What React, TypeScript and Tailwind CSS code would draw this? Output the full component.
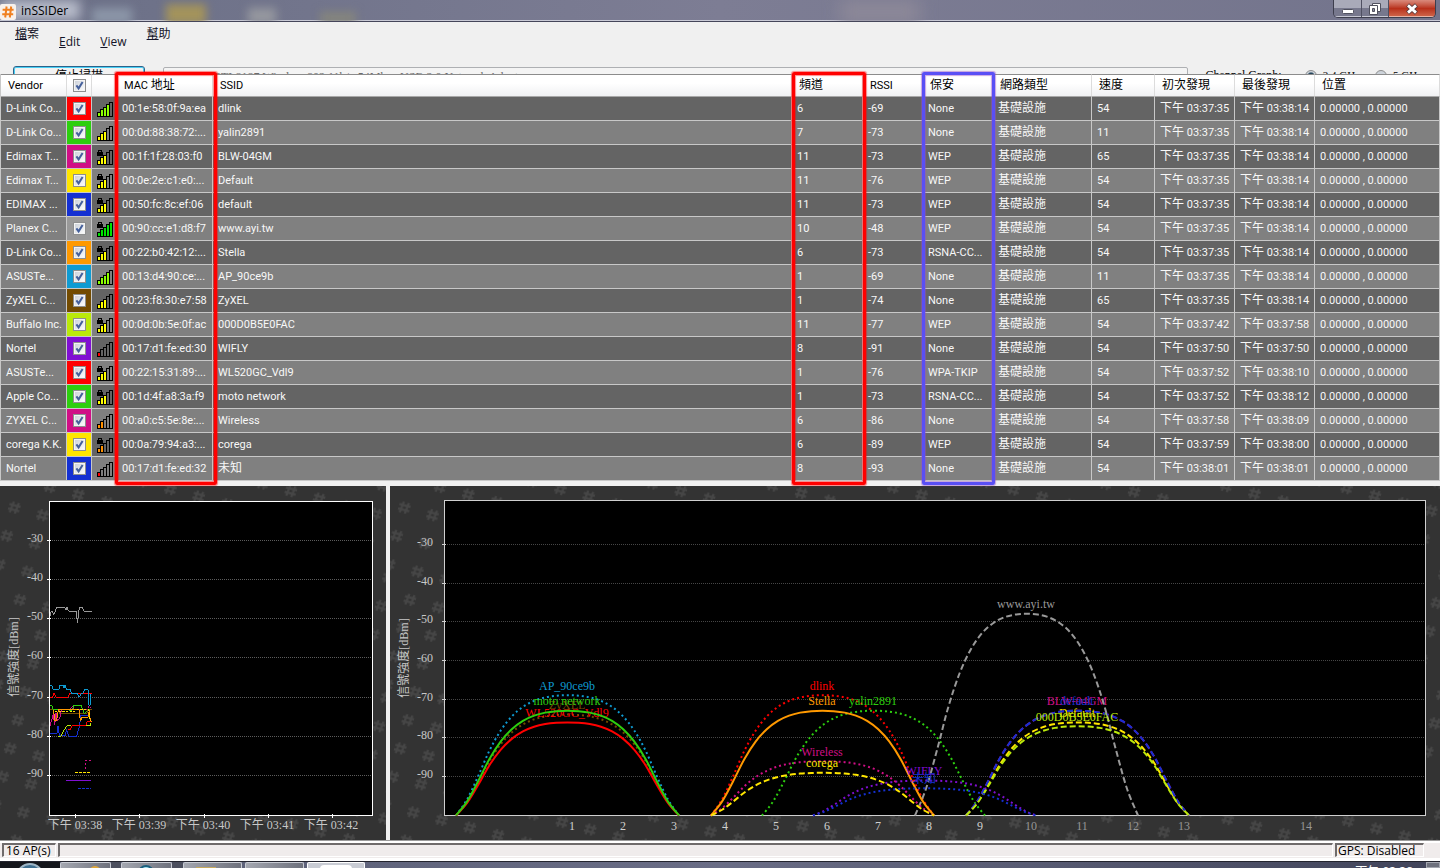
import { useId } from 'react'

type AccessPoint = {
  vendor: string
  color: string
  mac: string
  ssid: string
  channel: number
  rssi: number
  security: string
  speed: number
  first: string
  last: string
}

const accessPoints: AccessPoint[] = [
  { vendor: 'D-Link Co...', color: '#ff0000', mac: '00:1e:58:0f:9a:ea', ssid: 'dlink', channel: 6, rssi: -69, security: 'None', speed: 54, first: '03:37:35', last: '03:38:14' },
  { vendor: 'D-Link Co...', color: '#2dce0f', mac: '00:0d:88:38:72:...', ssid: 'yalin2891', channel: 7, rssi: -73, security: 'None', speed: 11, first: '03:37:35', last: '03:38:14' },
  { vendor: 'Edimax T...', color: '#d00f86', mac: '00:1f:1f:28:03:f0', ssid: 'BLW-04GM', channel: 11, rssi: -73, security: 'WEP', speed: 65, first: '03:37:35', last: '03:38:14' },
  { vendor: 'Edimax T...', color: '#ffe600', mac: '00:0e:2e:c1:e0:...', ssid: 'Default', channel: 11, rssi: -76, security: 'WEP', speed: 54, first: '03:37:35', last: '03:38:14' },
  { vendor: 'EDIMAX ...', color: '#1430d2', mac: '00:50:fc:8c:ef:06', ssid: 'default', channel: 11, rssi: -73, security: 'WEP', speed: 54, first: '03:37:35', last: '03:38:14' },
  { vendor: 'Planex C...', color: '#999999', mac: '00:90:cc:e1:d8:f7', ssid: 'www.ayi.tw', channel: 10, rssi: -48, security: 'WEP', speed: 54, first: '03:37:35', last: '03:38:14' },
  { vendor: 'D-Link Co...', color: '#ff9900', mac: '00:22:b0:42:12:...', ssid: 'Stella', channel: 6, rssi: -73, security: 'RSNA-CC...', speed: 54, first: '03:37:35', last: '03:38:14' },
  { vendor: 'ASUSTe...', color: '#0f9bd2', mac: '00:13:d4:90:ce:...', ssid: 'AP_90ce9b', channel: 1, rssi: -69, security: 'None', speed: 11, first: '03:37:35', last: '03:38:14' },
  { vendor: 'ZyXEL C...', color: '#734b00', mac: '00:23:f8:30:e7:58', ssid: 'ZyXEL', channel: 1, rssi: -74, security: 'None', speed: 65, first: '03:37:35', last: '03:38:14' },
  { vendor: 'Buffalo Inc.', color: '#bbe90a', mac: '00:0d:0b:5e:0f:ac', ssid: '000D0B5E0FAC', channel: 11, rssi: -77, security: 'WEP', speed: 54, first: '03:37:42', last: '03:37:58' },
  { vendor: 'Nortel', color: '#800fd2', mac: '00:17:d1:fe:ed:30', ssid: 'WIFLY', channel: 8, rssi: -91, security: 'None', speed: 54, first: '03:37:50', last: '03:37:50' },
  { vendor: 'ASUSTe...', color: '#ff0000', mac: '00:22:15:31:89:...', ssid: 'WL520GC_Vdl9', channel: 1, rssi: -76, security: 'WPA-TKIP', speed: 54, first: '03:37:52', last: '03:38:10' },
  { vendor: 'Apple Co...', color: '#2dce0f', mac: '00:1d:4f:a8:3a:f9', ssid: 'moto network', channel: 1, rssi: -73, security: 'RSNA-CC...', speed: 54, first: '03:37:52', last: '03:38:12' },
  { vendor: 'ZYXEL C...', color: '#d00f86', mac: '00:a0:c5:5e:8e:...', ssid: 'Wireless', channel: 6, rssi: -86, security: 'None', speed: 54, first: '03:37:58', last: '03:38:09' },
  { vendor: 'corega K.K.', color: '#ffe600', mac: '00:0a:79:94:a3:...', ssid: 'corega', channel: 6, rssi: -89, security: 'WEP', speed: 54, first: '03:37:59', last: '03:38:00' },
  { vendor: 'Nortel', color: '#1430d2', mac: '00:17:d1:fe:ed:32', ssid: '未知', channel: 8, rssi: -93, security: 'None', speed: 54, first: '03:38:01', last: '03:38:01' },
]

const levels = [-30, -40, -50, -60, -70, -80, -90]

function Checkbox({ label }: { label: string }) {
  return (
    <span className="relative inline-block size-[13px] align-middle">
      <input
        type="checkbox"
        defaultChecked
        aria-label={label}
        className="peer block size-[13px] appearance-none border border-[#8e8f8f] bg-gradient-to-br from-[#c9ced6] to-white shadow-[inset_0_0_0_1px_#f4f4f4]"
      />
      <svg viewBox="0 0 13 13" className="pointer-events-none absolute inset-0 hidden size-[13px] peer-checked:block">
        <path d="M3.4 6.4 5.6 9.4 9.6 3" fill="none" stroke="#45609c" strokeWidth="2" />
      </svg>
    </span>
  )
}

function SignalIcon({ rssi, locked }: { rssi: number; locked: boolean }) {
  const [count, fill] =
    rssi > -60 ? [5, '#00e400'] : rssi > -72 ? [4, '#8cff00'] : rssi > -80 ? [3, '#ffff00'] : rssi > -90 ? [2, '#ff9000'] : [1, '#ff0000']
  return (
    <svg viewBox="0 0 16 16" className="block size-4" shapeRendering="crispEdges">
      {[4, 7, 9, 12, 14].map((h, i) => (
        <rect
          key={i}
          x={i * 3 + 0.5}
          y={15.5 - h}
          width="3"
          height={h}
          fill={i < Number(count) ? String(fill) : 'none'}
          stroke="#000"
        />
      ))}
      {locked && (
        <>
          <rect x="0" y="3" width="6" height="4" fill="#000" />
          <path d="M1.5 3V1.5h3V3" fill="none" stroke="#000" />
        </>
      )}
    </svg>
  )
}

const headCell = 'h-[23px] border-y border-r border-t-[#8c8c8c] border-b-[#a8a8a8] border-r-[#dcdcdc] pl-[7px] text-left font-normal'
const cell = 'h-6 overflow-hidden border-r border-b border-[#c8c8c8] pl-[5px] whitespace-nowrap'
const cjk = 'text-xs'

function Time({ value }: { value: string }) {
  return (
    <>
      <span className={cjk}>下午</span> {value}
    </>
  )
}

function NetworkTable() {
  return (
    <table className="w-full table-fixed border-separate border-spacing-0 border-l border-[#c8c8c8] font-[Roboto,'Noto_Sans_CJK_TC',sans-serif] text-[11px] leading-4">
      <colgroup>
        <col className="w-[66px]" />
        <col className="w-[25px]" />
        <col className="w-[25px]" />
        <col className="w-[96px]" />
        <col />
        <col className="w-[71px]" />
        <col className="w-[60px]" />
        <col className="w-[70px]" />
        <col className="w-[99px]" />
        <col className="w-[63px]" />
        <col className="w-[80px]" />
        <col className="w-[80px]" />
        <col className="w-[125px]" />
      </colgroup>
      <thead className="bg-gradient-to-b from-white from-40% to-[#eff0f2] text-black">
        <tr>
          <th className={headCell}>Vendor</th>
          <th className="border-y border-r border-t-[#8c8c8c] border-b-[#a8a8a8] border-r-[#dcdcdc] text-center leading-none">
            <Checkbox label="Select all" />
          </th>
          <th className={headCell} aria-label="Signal" />
          <th className={headCell}>MAC <span className={cjk}>地址</span></th>
          <th className={headCell}>SSID</th>
          <th className={headCell}><span className={cjk}>頻道</span></th>
          <th className={headCell}>RSSI</th>
          <th className={headCell}><span className={cjk}>保安</span></th>
          <th className={headCell}><span className={cjk}>網路類型</span></th>
          <th className={headCell}><span className={cjk}>速度</span></th>
          <th className={headCell}><span className={cjk}>初次發現</span></th>
          <th className={headCell}><span className={cjk}>最後發現</span></th>
          <th className={headCell}><span className={cjk}>位置</span></th>
        </tr>
      </thead>
      <tbody className="text-[#f8f8f8]">
        {accessPoints.map((ap) => (
          <tr key={ap.mac} className="odd:bg-[#646464] even:bg-[#808080]">
            <td className={cell}>{ap.vendor}</td>
            <td className="border-r border-b border-[#c8c8c8] text-center leading-none" style={{ backgroundColor: ap.color }}>
              <Checkbox label={ap.ssid} />
            </td>
            <td className={cell}>
              <SignalIcon rssi={ap.rssi} locked={ap.security !== 'None'} />
            </td>
            <td className={cell}>{ap.mac}</td>
            <td className={cell}>{ap.ssid === '未知' ? <span className={cjk}>{ap.ssid}</span> : ap.ssid}</td>
            <td className={cell}>{ap.channel}</td>
            <td className={cell}>{ap.rssi}</td>
            <td className={cell}>{ap.security}</td>
            <td className={cell}><span className={cjk}>基礎設施</span></td>
            <td className={cell}>{ap.speed}</td>
            <td className={cell}><Time value={ap.first} /></td>
            <td className={cell}><Time value={ap.last} /></td>
            <td className={cell}>0.00000 , 0.00000</td>
          </tr>
        ))}
      </tbody>
    </table>
  )
}

function HashPattern({ id }: { id: string }) {
  return (
    <defs>
      <pattern id={id} width="29.2" height="29.2" patternUnits="userSpaceOnUse" patternTransform="translate(4 3.8) rotate(15)">
        <path d="M12.6 9 11.4 20.2M17.8 9 16.6 20.2M9 12.2H20.4M8.8 17H20.2" stroke="#464646" strokeWidth="2.2" />
      </pattern>
    </defs>
  )
}

// Traces are recorded at three units per pixel
const traces: { color: string; points: string; dash?: string }[] = [
  { color: '#999999', points: '150,408 153,395 158,395 161,405 170,382 194,382 197,391 201,382 206,394 229,394 232,428 238,382 248,382 251,394 276,394' },
  { color: '#734b00', points: '150,688 178,688 178,700 262,700 262,688 276,688' },
  { color: '#d00f86', points: '150,737 160,703 164,734 168,700 172,722 180,712 184,690' },
  { color: '#d00f86', points: '212,688 216,677 222,688 262,688 268,677 273,688', dash: '6 4' },
  { color: '#2dce0f', points: '150,676 156,678 159,688 205,688 214,694 222,676 243,676 248,688 252,700 262,694 268,688 268,700' },
  { color: '#1430d2', points: '150,760 172,760 174,737 178,768 195,768 200,748 206,769 230,769 238,740 243,706 270,706' },
  { color: '#ff9900', points: '160,690 165,722 170,720 175,690 238,690 241,724 246,712 264,712 268,690 271,724 276,724' },
  { color: '#ffe600', points: '165,694 222,694 230,690 266,690 269,706 271,736', dash: '7 4' },
  { color: '#ff0000', points: '150,652 158,652 162,640 169,652 205,652 208,640 276,640' },
  { color: '#0f9bd2', points: '150,616 157,618 159,628 177,628 180,616 190,616 192,625 195,616 199,628 210,628 214,640 232,640 237,652 244,640 250,640 254,628 264,628 267,676 271,676 273,642' },
  { color: '#ff0000', points: '205,748 212,748 215,737 260,737 260,725 272,725' },
  { color: '#bbe90a', points: '175,769 182,769 200,737 214,737 M258,737 273,737 273,728' },
  { color: '#d00f86', points: '257,868 257,841 273,841', dash: '8 4' },
  { color: '#ffe600', points: '226,877 273,877', dash: '9 3' },
  { color: '#800fd2', points: '199,901 273,901' },
  { color: '#1430d2', points: '234,925 273,925', dash: '9 3' },
]

const minutes = ['03:38', '03:39', '03:40', '03:41', '03:42']

function TimeGraph() {
  const id = useId()
  const y = (dbm: number) => Math.round(289 - (dbm + 90) * 3.92) + 0.5
  return (
    <svg viewBox="0 0 386 354" className="min-w-0 flex-[386_1_0%] bg-[#333333] font-['Liberation_Serif','Noto_Sans_CJK_TC',serif] text-xs">
      <HashPattern id={id} />
      <rect width="386" height="354" fill={`url(#${id})`} />
      <rect x="49.5" y="15.5" width="323" height="314" fill="#000" stroke="#fff" />
      {levels.map((dbm) => (
        <g key={dbm}>
          <path d={`M50 ${y(dbm)}H372`} stroke="#5c5c5c" strokeDasharray="1 1" />
          <path d={`M47 ${y(dbm)}h4`} stroke="#fff" />
          <text x="43" y={y(dbm) + 1} textAnchor="end" fill="#c8c8c8">{dbm}</text>
        </g>
      ))}
      {minutes.map((minute, i) => (
        <g key={minute}>
          <path d={`M${Math.round(75 + i * 64.3) + 0.5} 328v4`} stroke="#fff" />
          <text x={75 + i * 64} y="343" textAnchor="middle" fill="#c8c8c8">下午 {minute}</text>
        </g>
      ))}
      <g transform="translate(0 -6) scale(.33333)" fill="none" strokeWidth="3" shapeRendering="crispEdges">
        {traces.map((t, i) => (
          <path key={i} d={`M${t.points}`} stroke={t.color} strokeDasharray={t.dash} />
        ))}
      </g>
      <text transform="translate(18 171) rotate(-90)" textAnchor="middle" fill="#c8c8c8">信號強度[dBm]</text>
    </svg>
  )
}

const channels = [1, 2, 3, 4, 5, 6, 7, 8, 9, 10, 11, 12, 13, 14]

// Half of the spectral mask: height at every tenth of the way from the edge to the centre
const mask = [0, 0.135, 0.33, 0.54, 0.705, 0.823, 0.903, 0.953, 0.982, 0.996, 1]

function maskPath(channel: number, rssi: number) {
  const cx = 177.5 + 51 * (channel - 1)
  const peak = (rssi + 100) * 3.88
  const pts = [...mask, ...mask.slice(0, -1).reverse()].map((h, i) => [cx + (i - 10) * 11.15, 329.5 - h * peak])
  let d = `M${pts[0][0]} ${pts[0][1]}`
  for (let i = 0; i < pts.length - 1; i++) {
    const a = pts[Math.max(i - 1, 0)]
    const b = pts[i]
    const c = pts[i + 1]
    const e = pts[Math.min(i + 2, pts.length - 1)]
    d += `C${b[0] + (c[0] - a[0]) / 6} ${b[1] + (c[1] - a[1]) / 6} ${c[0] - (e[0] - b[0]) / 6} ${c[1] - (e[1] - b[1]) / 6} ${c[0]} ${c[1]}`
  }
  return d
}

function ChannelGraph() {
  const id = useId()
  const y = (dbm: number) => Math.round(290 - (dbm + 90) * 3.87) + 0.5
  return (
    <svg viewBox="0 0 1050 354" className="min-w-0 flex-[1050_1_0%] bg-[#333333] font-['Liberation_Serif','Noto_Sans_CJK_TC',serif] text-xs">
      <HashPattern id={id} />
      <rect width="1050" height="354" fill={`url(#${id})`} />
      <rect x="54.5" y="14.5" width="981" height="315" fill="#000" stroke="#d0d0d0" />
      {levels.map((dbm) => (
        <g key={dbm}>
          <path d={`M55 ${y(dbm)}H1035`} stroke="#464646" strokeDasharray="1 1" />
          <path d={`M52 ${y(dbm)}h4`} stroke="#d0d0d0" />
          <text x="43" y={y(dbm) + 1} textAnchor="end" fill="#c8c8c8">{dbm}</text>
        </g>
      ))}
      {channels.map((ch) => (
        <text key={ch} x={ch === 14 ? 916 : 182 + 51 * (ch - 1)} y="344" textAnchor="middle" fill={ch < 10 ? '#d0d0d0' : '#969696'}>
          {ch}
        </text>
      ))}
      {accessPoints.map((ap) => (
        <g key={ap.mac}>
          <path
            d={maskPath(ap.channel, ap.rssi)}
            fill="none"
            stroke={ap.color}
            strokeWidth="2"
            strokeDasharray={ap.security === 'None' ? '2 3' : ap.security === 'WEP' ? '6 3' : undefined}
          />
          <text x={177 + 51 * (ap.channel - 1)} y={Math.round(329 - (ap.rssi + 100) * 3.88 - 5)} textAnchor="middle" fill={ap.color}>
            {ap.ssid}
          </text>
        </g>
      ))}
      <text transform="translate(18 172) rotate(-90)" textAnchor="middle" fill="#c8c8c8">信號強度[dBm]</text>
    </svg>
  )
}

function TitleBar() {
  return (
    <header className="relative flex h-[22px] items-start justify-between overflow-hidden border-b border-[#45465a] bg-gradient-to-r from-[#6a6f86] via-[#7d7d94] to-[#73748c] shadow-[inset_0_-1px_0_#c9cad6]">
      <div className="absolute top-2 left-[92px] h-4 w-10 bg-[#8c96a8] blur-[5px]" />
      <div className="absolute top-1 left-[166px] h-5 w-10 bg-[#a3935c] blur-[4px]" />
      <div className="absolute top-2 left-[248px] h-4 w-7 bg-[#96989f] blur-[5px]" />
      <div className="absolute top-3 left-[320px] h-3 w-9 bg-[#86867c] blur-[5px]" />
      <div className="absolute top-0 left-[840px] h-6 w-20 bg-[#8c8898] blur-[8px]" />
      <div className="absolute top-0 left-0 h-5 w-20 bg-[#b9bdcb] blur-[6px]" />
      <div className="relative flex items-center gap-[5px]">
        <svg viewBox="0 0 16 16" className="mt-[3px] size-4">
          <rect width="16" height="16" rx="2" fill="#f7f1ec" />
          <path d="M6.6 2.5 5.2 13.5M11.2 2.5 9.8 13.5M2.6 5.8H13.6M2.2 10.2H13.2" stroke="#f08020" strokeWidth="2" />
        </svg>
        <h1 className="pt-[2px] font-['Open_Sans',sans-serif] text-xs leading-[18px] text-black">inSSIDer</h1>
      </div>
      <div className="relative mr-1 flex h-[18px] overflow-hidden rounded-b-[5px] border border-t-0 border-[#3d3e4d]">
        <button aria-label="Minimize" className="flex w-7 items-end justify-center border-r border-[#4f5062] bg-gradient-to-b from-[#a9aab9] from-50% to-[#77788d] to-50% pb-[2px] shadow-[inset_0_-1px_0_#c6c7d2]">
          <svg viewBox="0 0 12 12" className="size-3">
            <rect x=".5" y="6.5" width="11" height="4" rx="1" fill="#fff" stroke="#50515f" />
          </svg>
        </button>
        <button aria-label="Restore" className="flex w-[27px] items-center justify-center border-r border-[#4f5062] bg-gradient-to-b from-[#a9aab9] from-50% to-[#77788d] to-50% shadow-[inset_0_-1px_0_#c6c7d2]">
          <svg viewBox="0 0 12 12" className="size-3">
            <path d="M3.5 .5h8V8.5H3.5z" fill="#fff" stroke="#50515f" />
            <path d="M.5 2.5H8.5V11.5H.5z" fill="#fff" stroke="#50515f" />
            <path d="M3.5 5.5h2v3h-2z" fill="#8c8da0" stroke="#50515f" />
          </svg>
        </button>
        <button aria-label="Close" className="flex w-[46px] items-center justify-center bg-gradient-to-b from-[#d98a7c] via-[#b8301a] via-50% to-[#d0674c] shadow-[inset_0_-1px_0_#e6b3a6]">
          <svg viewBox="0 0 12 12" className="size-3">
            <path d="M1.5 2 10.5 10M10.5 2 1.5 10" stroke="#5a3a3c" strokeWidth="4.6" />
            <path d="M2 2.4 10 9.6M10 2.4 2 9.6" stroke="#fff" strokeWidth="2.8" />
          </svg>
        </button>
      </div>
    </header>
  )
}

function MenuAndToolbar() {
  return (
    <div className="h-[52px] overflow-hidden">
      <nav className="flex h-11 items-start pt-1 pl-[5px] font-['Open_Sans','Noto_Sans_CJK_TC',sans-serif] text-xs leading-4 text-[#141428]">
        <button className="px-[10px]"><u>檔</u>案</button>
        <button className="px-[10px] pt-2"><u>E</u>dit</button>
        <button className="px-[10px] pt-2"><u>V</u>iew</button>
        <button className="px-[10px]"><u>幫</u>助</button>
      </nav>
      <div className="flex items-start pr-[18px] pl-[13px] font-['Liberation_Serif','Noto_Sans_CJK_TC',serif] text-xs leading-[18px]">
        <button className="h-5 w-[132px] rounded-[3px] border border-[#2c628b] bg-[#f2f2f2] text-black shadow-[inset_0_0_0_1px_#48d0f5]">停止掃描</button>
        <select
          disabled
          aria-label="Network adapter"
          className="mt-px mr-[17px] ml-[18px] h-5 min-w-0 flex-1 appearance-none rounded-[2px] border border-[#aeb0b3] bg-[#f4f4f4] px-[10px] leading-[18px] text-[#6d6d6d] opacity-100"
        >
          <option>Realtek RTL8187 Wireless 802.11b/g 54Mbps USB 2.0 Network Adapter</option>
        </select>
        <span className="pr-[23px] text-black">Channel Graph:</span>
        <label className="flex items-start gap-[6px] pr-[15px] text-[11px] text-black">
          <input type="radio" name="band" defaultChecked className="mt-1 size-3 appearance-none rounded-full border border-[#8e8f8f] bg-[#cdd3da] checked:bg-radial checked:from-[#26465c] checked:from-40% checked:to-[#cdd3da] checked:to-60%" />
          2.4 GHz
        </label>
        <label className="flex items-start gap-[6px] text-[11px] text-black">
          <input type="radio" name="band" className="mt-1 size-3 appearance-none rounded-full border border-[#8e8f8f] bg-[#cdd3da]" />
          5 GHz
        </label>
      </div>
    </div>
  )
}

function StatusBar() {
  const panel = 'h-[14px] border-t-2 border-l-2 border-r border-b border-t-[#6f6b6b] border-l-[#6f6b6b] border-r-white border-b-white'
  return (
    <footer className="flex h-[21px] items-start gap-[2px] border-t border-[#9a9a9a] bg-[#f0ecec] pt-[2px] pr-4 pl-[2px] font-['Open_Sans',sans-serif] text-xs leading-[12px] text-black shadow-[inset_0_2px_0_#fff,inset_0_-3px_0_#fff]">
      <div className={`${panel} w-[54px] pl-[2px] whitespace-nowrap`}>16 AP(s)</div>
      <div className={`${panel} flex-1`} />
      <div className={`${panel} w-[89px] pl-px whitespace-nowrap`}>GPS: Disabled</div>
    </footer>
  )
}

function Taskbar() {
  const task = 'h-full rounded-t-[2px] border border-b-0 border-[#c9ccd4] bg-gradient-to-r from-[#a4a7b0] to-[#6e717d]'
  return (
    <div className="flex h-[7px] items-stretch overflow-hidden border-t border-[#23242e] bg-gradient-to-r from-[#565b72] via-[#6a6d86] to-[#41445a]">
      <div className="flex w-[60px] justify-center bg-[#14161c]">
        <div className="mt-px size-7 shrink-0 rounded-full border-2 border-[#9fb6c6] bg-[#3f6f90]" />
      </div>
      <div className={`${task} w-[51px]`}>
        <div className="mt-[3px] ml-7 h-2 w-3 rounded-t-full bg-[#e0a83c]" />
      </div>
      <div className="w-[10px] bg-[#4c4f5e]" />
      <div className={`${task} w-[51px]`}>
        <div className="mt-[2px] ml-4 size-4 rounded-full border-2 border-[#1c5f7d] bg-[#a8e6f5]" />
      </div>
      <div className="w-[11px] bg-[#4c4f5e]" />
      <div className={`${task} w-[59px]`}>
        <div className="mt-1 ml-3 h-1 w-5 bg-[#c8aa5e]" />
      </div>
      <div className="w-[3px]" />
      <div className={`${task} w-[59px]`} />
      <div className="w-[3px]" />
      <div className="w-[58px] rounded-t-[2px] border border-b-0 border-white bg-[#c9ccd4]">
        <div className="mx-auto mt-[2px] h-2 w-8 rounded-t bg-white" />
      </div>
      <div className="ml-auto flex pr-[13px]">
        <span className="pt-[2px] font-['Open_Sans','Noto_Sans_CJK_TC',sans-serif] text-xs leading-4 text-white">下午 03:38</span>
      </div>
      <div className="w-[14px] border border-[#a4a7b0] bg-[#6e717d]" />
    </div>
  )
}

export default function App() {
  return (
    <div className="flex min-h-screen flex-col bg-[#f0f0f0]">
      <TitleBar />
      <MenuAndToolbar />
      <main className="flex flex-1 flex-col gap-[5px]">
        <section className="relative">
          <NetworkTable />
          {/* Column highlights */}
          <div className="pointer-events-none absolute -top-[2px] -bottom-[4px] left-[115px] w-[102px] rounded-[2px] border-[3px] border-[#ff0000] shadow-[0_0_1px_1px_rgba(255,0,0,0.45),inset_0_0_1px_1px_rgba(255,0,0,0.45)]" />
          <div className="pointer-events-none absolute -top-[2px] right-[574px] -bottom-[4px] w-[74px] rounded-[2px] border-[3px] border-[#ff0000] shadow-[0_0_1px_1px_rgba(255,0,0,0.45),inset_0_0_1px_1px_rgba(255,0,0,0.45)]" />
          <div className="pointer-events-none absolute -top-[2px] right-[445px] -bottom-[4px] w-[73px] rounded-[2px] border-[3px] border-[#5a4ff5] shadow-[0_0_1px_1px_rgba(150,80,200,0.5),inset_0_0_1px_1px_rgba(150,80,200,0.5)]" />
        </section>
        <section className="flex flex-1 gap-1">
          <TimeGraph />
          <ChannelGraph />
        </section>
      </main>
      <StatusBar />
      <Taskbar />
    </div>
  )
}
